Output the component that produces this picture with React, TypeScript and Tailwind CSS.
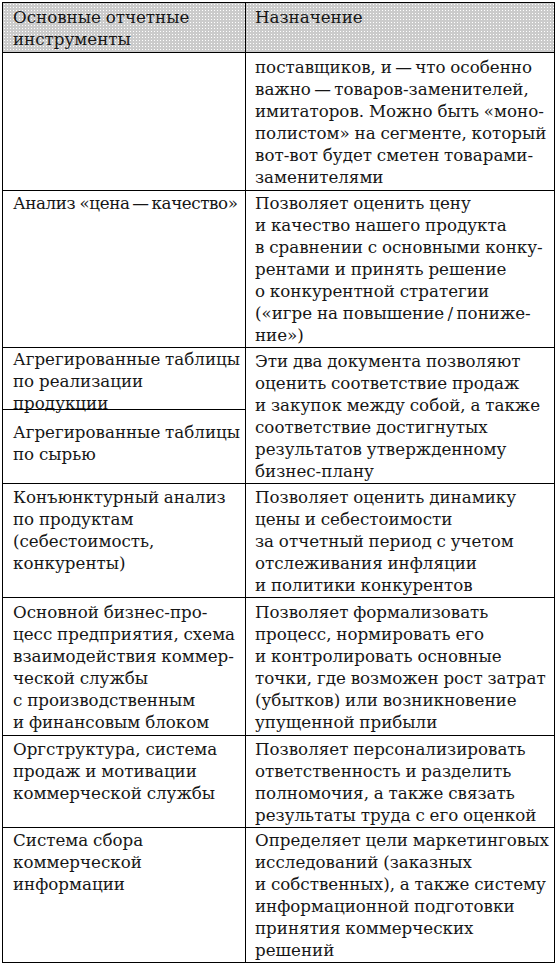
import React from "react";

const Lines = ({ lines }: { lines: string[] }) => (
  <>
    {lines.map((l, i) => (
      <div key={i} className="whitespace-nowrap">
        {l}
      </div>
    ))}
  </>
);

type Row = { left: string[]; right: string[]; pad: string };

const T = "\u2009";

const rows: Row[] = [
  {
    pad: "pt-[3px] pb-[2px]",
    left: [],
    right: [
      `поставщиков, и${T}—${T}что особенно`,
      `важно${T}—${T}товаров-заменителей,`,
      "имитаторов. Можно быть «моно-",
      "полистом» на сегменте, который",
      "вот-вот будет сметен товарами-",
      "заменителями",
    ],
  },
];

const rows2: Row[] = [
  {
    pad: "pt-[2px] pb-[1px]",
    left: ["Конъюнктурный анализ", "по продуктам", "(себестоимость,", "конкуренты)"],
    right: [
      "Позволяет оценить динамику",
      "цены и себестоимости",
      "за отчетный период с учетом",
      "отслеживания инфляции",
      "и политики конкурентов",
    ],
  },
  {
    pad: "pt-[3px] pb-[2px]",
    left: [
      "Основной бизнес-про-",
      "цесс предприятия, схема",
      "взаимодействия коммер-",
      "ческой службы",
      "с производственным",
      "и финансовым блоком",
    ],
    right: [
      "Позволяет формализовать",
      "процесс, нормировать его",
      "и контролировать основные",
      "точки, где возможен рост затрат",
      "(убытков) или возникновение",
      "упущенной прибыли",
    ],
  },
  {
    pad: "pt-[2px] pb-[1px]",
    left: ["Оргструктура, система", "продаж и мотивации", "коммерческой службы"],
    right: [
      "Позволяет персонализировать",
      "ответственность и разделить",
      "полномочия, а также связать",
      "результаты труда с его оценкой",
    ],
  },
  {
    pad: "pt-[1px] pb-[1px]",
    left: ["Система сбора", "коммерческой", "информации"],
    right: [
      "Определяет цели маркетинговых",
      "исследований (заказных",
      "и собственных), а также систему",
      "информационной подготовки",
      "принятия коммерческих",
      "решений",
    ],
  },
];

const RowView = ({ r }: { r: Row }) => (
  <div className="flex border-t border-black">
    <div className={`w-[243px] shrink-0 border-r border-black pl-[10px] ${r.pad}`}>
      <Lines lines={r.left} />
    </div>
    <div className={`flex-1 pl-[9px] ${r.pad}`}>
      <Lines lines={r.right} />
    </div>
  </div>
);

export default function App() {
  return (
    <div className="w-[558px] h-[966px] bg-white pl-[2px] pt-[2px]">
      <div
        className="w-[553px] border border-black text-[16.7px] leading-[22px] tracking-[0px] [word-spacing:-0.5px] text-[#161616]"
        style={{ fontFamily: '"DejaVu Serif", serif' }}
      >
        <div className="flex bg-[#cbcbcb] bg-[radial-gradient(circle,#ffffff_0.7px,transparent_0.9px)] bg-[length:3px_3px]">
          <div className="w-[243px] shrink-0 border-r border-black pl-[10px] pt-[3px] pb-[2px]">
            <Lines lines={["Основные отчетные", "инструменты"]} />
          </div>
          <div className="flex-1 pl-[9px] pt-[3px] pb-[2px]">
            <Lines lines={["Назначение"]} />
          </div>
        </div>
        {rows.map((r, i) => (
          <RowView key={i} r={r} />
        ))}
        <div className="flex border-t border-black">
          <div className="w-[243px] shrink-0 border-r border-black pl-[10px] pt-[1px] pb-[1px]">
            <div className="whitespace-nowrap tracking-[-0.4px]">{`Анализ «цена${T}—${T}качество»`}</div>
          </div>
          <div className="flex-1 pl-[9px] pt-[1px] pb-[1px]">
            <Lines
              lines={[
                "Позволяет оценить цену",
                "и качество нашего продукта",
                "в сравнении с основными конку-",
                "рентами и принять решение",
                "о конкурентной стратегии",
                `(«игре на повышение${T}/${T}пониже-`,
                "ние»)",
              ]}
            />
          </div>
        </div>
        <div className="flex border-t border-black">
          <div className="w-[243px] shrink-0 border-r border-black flex flex-col">
            <div className="h-[61px] pl-[10px] pt-[0px]">
              <Lines lines={["Агрегированные таблицы", "по реализации", "продукции"]} />
            </div>
            <div className="border-t border-black pl-[10px] pt-[11px]">
              <Lines lines={["Агрегированные таблицы", "по сырью"]} />
            </div>
          </div>
          <div className="flex-1 pl-[9px] pt-[2px] pb-[1px]">
            <Lines
              lines={[
                "Эти два документа позволяют",
                "оценить соответствие продаж",
                "и закупок между собой, а также",
                "соответствие достигнутых",
                "результатов утвержденному",
                "бизнес-плану",
              ]}
            />
          </div>
        </div>
        {rows2.map((r, i) => (
          <RowView key={i} r={r} />
        ))}
      </div>
    </div>
  );
}
